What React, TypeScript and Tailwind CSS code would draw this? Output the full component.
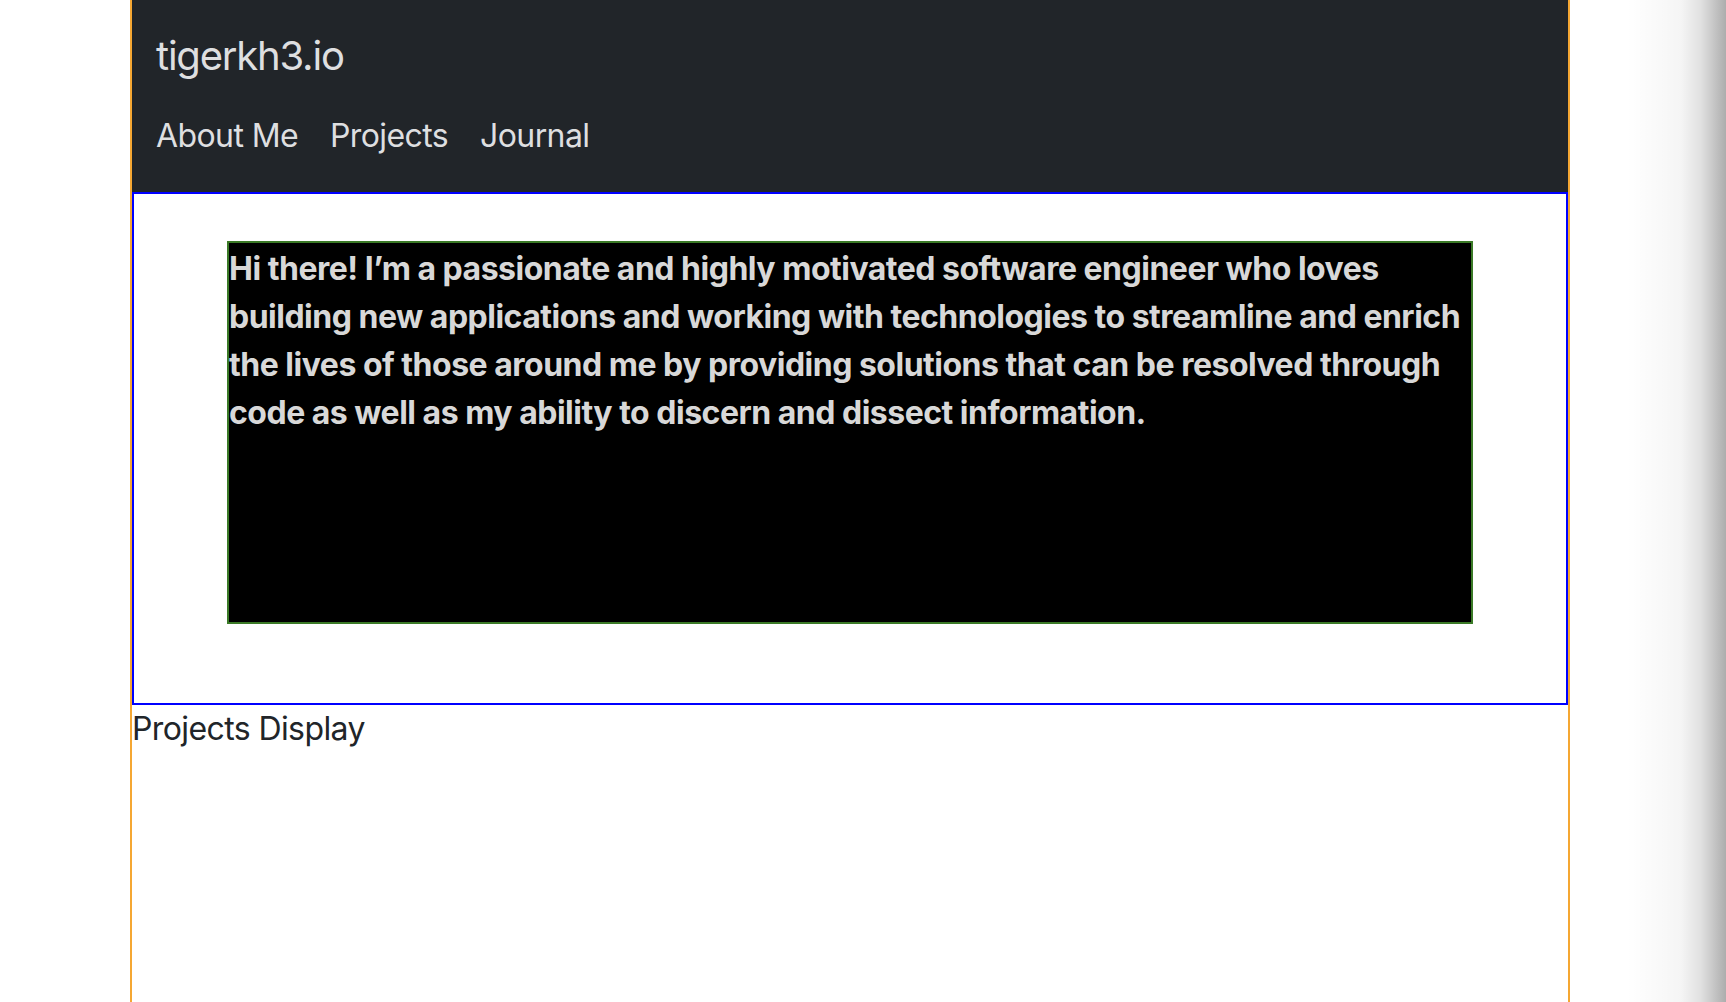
const links = ["About Me", "Projects", "Journal"];

export default function App() {
  return (
    <div className="relative min-h-screen overflow-hidden bg-white font-['Inter',sans-serif]">
      <div className="w-[1700px] min-h-screen">
        <div className="mx-auto w-[1440px] min-h-screen border-x-2 border-[#f5a733]">
          <nav className="bg-[#212529] h-[192px] px-6 py-4 text-[#dedfe0]">
            <div className="py-[10px] text-[40px] leading-[60px] tracking-[-1.2px]">tigerkh3.io</div>
            <ul className="flex gap-8 text-[32px] leading-[48px] tracking-[-0.6px]">
              {links.map((l) => (
                <li key={l} className="py-4">
                  {l}
                </li>
              ))}
            </ul>
          </nav>

          <section className="h-[513px] border-2 border-[#0000ff] pt-[47px]">
            <div className="mx-auto w-[1246px] h-[383px] border-2 border-[#3b7a27] bg-black">
              <p className="pt-[2px] text-[32px] leading-[48px] font-bold tracking-[-0.5px] text-[#d8d8d8]">
                Hi there! I’m a passionate and highly motivated software engineer who loves
                building new applications and working with technologies to streamline and enrich
                the lives of those around me by providing solutions that can be resolved through
                code as well as my ability to discern and dissect information.
              </p>
            </div>
          </section>

          <p className="text-[32px] leading-[48px] tracking-[-0.6px] text-[#212529]">Projects Display</p>
        </div>
      </div>

      <div className="absolute top-0 right-0 h-full w-[100px] bg-[linear-gradient(to_right,rgba(0,0,0,0),rgba(0,0,0,0.04)_55%,rgba(0,0,0,0.12)_75%,rgba(0,0,0,0.32))]" />
    </div>
  );
}
